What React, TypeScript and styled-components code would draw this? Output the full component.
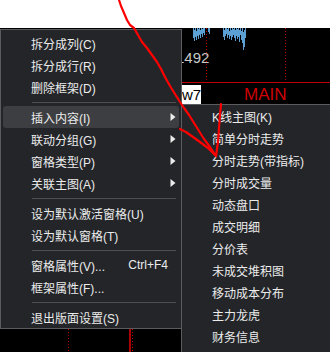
import React from "react";
import styled, { createGlobalStyle } from "styled-components";

const Global = createGlobalStyle`
  html, body { margin: 0; padding: 0; background: #fff; }
  body {
    width: 330px; height: 352px; overflow: hidden;
    font-family: "Liberation Sans", "Noto Sans CJK SC", sans-serif;
  }
`;

const Screen = styled.div`
  position: relative;
  width: 330px;
  height: 352px;
  overflow: hidden;
  display: flex;
  flex-direction: column;
  background: #fff;
`;

const TopStrip = styled.div`
  flex: none;
  height: 28px;
  background: #fff;
`;

const Chart = styled.div`
  flex: 1;
  display: flex;
  flex-direction: column;
  background: #000;
`;

const UpperPane = styled.div`
  position: relative;
  flex: none;
  height: 54px;
`;

const PaneSvg = styled.svg`
  display: block;
`;

const PriceLabel = styled.span`
  position: absolute;
  left: 176px;
  top: 22px;
  color: #c8c8c8;
  font: 15px/15px "Liberation Sans", sans-serif;
`;

const RedRule = styled.div`
  flex: none;
  height: 1px;
  background: #c00000;
`;

const LabelRow = styled.div`
  flex: none;
  box-sizing: border-box;
  height: 21px;
  display: flex;
  align-items: flex-start;
  padding: 2px 0 0 182px;
`;

const Tag = styled.span`
  width: 19px;
  height: 19px;
  background: #fff;
  color: #000;
  font: 15px/19px "Liberation Sans", sans-serif;
  text-align: center;
`;

const MainLabel = styled.span`
  margin-left: 43px;
  color: #d00000;
  font: 17px/19px "Liberation Sans", sans-serif;
`;

const LowerPane = styled.div`
  flex: 1;
`;

const Menu = styled.div<{ $left: number; $top: number; $width: number; $height: number; $padTop: number }>`
  position: absolute;
  left: ${(p) => p.$left}px;
  top: ${(p) => p.$top}px;
  width: ${(p) => p.$width}px;
  height: ${(p) => p.$height}px;
  box-sizing: border-box;
  padding-top: ${(p) => p.$padTop}px;
  background: #232529;
  border: 1px solid #5a5c60;
  display: flex;
  flex-direction: column;
  color: #ececec;
  font-size: 12px;
`;

const Item = styled.div<{ $active?: boolean; $padLeft: number }>`
  flex: none;
  height: 22px;
  margin: 0 2px;
  padding: 0 3px 0 ${(p) => p.$padLeft}px;
  display: flex;
  align-items: center;
  border-radius: 3px;
  background: ${(p) => (p.$active ? "#3d3e41" : "transparent")};
  white-space: nowrap;
`;

const ItemLabel = styled.span`
  flex: 1;
`;

const Shortcut = styled.span`
  margin-right: 8px;
  font-family: "Liberation Sans", sans-serif;
`;

const Separator = styled.div`
  flex: none;
  height: 8px;
  display: flex;
  align-items: center;
  padding: 0 5px 0 31px;
  &::after {
    content: "";
    flex: 1;
    height: 1px;
    background: #4d4f53;
  }
`;

const Annotation = styled.svg`
  position: absolute;
  left: 0;
  top: 0;
  pointer-events: none;
`;

const Arrow = () => (
  <svg width="6" height="8" viewBox="0 0 6 8">
    <polygon points="0.5,0 5.5,4 0.5,8" fill="#ececec" />
  </svg>
);

type Entry = { label?: string; sub?: boolean; active?: boolean; shortcut?: string; sep?: boolean };

const mainItems: Entry[] = [
  { label: "拆分成列(C)" },
  { label: "拆分成行(R)" },
  { label: "删除框架(D)" },
  { sep: true },
  { label: "插入内容(I)", sub: true, active: true },
  { label: "联动分组(G)", sub: true },
  { label: "窗格类型(P)", sub: true },
  { label: "关联主图(A)", sub: true },
  { sep: true },
  { label: "设为默认激活窗格(U)" },
  { label: "设为默认窗格(T)" },
  { sep: true },
  { label: "窗格属性(V)...", shortcut: "Ctrl+F4" },
  { label: "框架属性(F)..." },
  { sep: true },
  { label: "退出版面设置(S)" },
];

const subItems = [
  "K线主图(K)",
  "简单分时走势",
  "分时走势(带指标)",
  "分时成交量",
  "动态盘口",
  "成交明细",
  "分价表",
  "未成交堆积图",
  "移动成本分布",
  "主力龙虎",
  "财务信息",
];

const bars: [number, number, number][] = [
  [193, 0, 10], [194, 2, 13], [195, 0, 9], [196, 3, 12], [197, 0, 8], [198, 1, 11],
  [199, 0, 7], [200, 2, 10], [201, 0, 6], [202, 1, 9], [203, 0, 5], [204, 0, 7],
  [208, 0, 4], [209, 0, 6],
  [223, 0, 9], [224, 2, 12], [225, 0, 8], [226, 0, 6], [227, 1, 10], [228, 0, 7],
  [229, 3, 11], [230, 0, 8], [231, 2, 12], [232, 0, 9], [233, 1, 7], [234, 0, 10],
  [235, 2, 13], [236, 0, 8], [237, 1, 11], [238, 0, 9], [239, 2, 14], [240, 0, 7],
  [241, 3, 12], [242, 0, 15], [243, 4, 22], [244, 2, 19], [245, 0, 10],
];

const line = (pts: number[][]) => pts.map((p) => p.join(",")).join(" ");

export default function App() {
  return (
    <>
      <Global />
      <Screen>
        <TopStrip />
        <Chart>
          <UpperPane>
            <PaneSvg width="330" height="54">
              {bars.map(([x, y1, y2]) => (
                <line key={x} x1={x + 0.5} x2={x + 0.5} y1={y1} y2={y2} stroke="#5b9fd3" strokeWidth="1" />
              ))}
              <line x1="206.5" x2="206.5" y1="0" y2="54" stroke="#c00000" strokeDasharray="1 2" />
              <line x1="285.5" x2="285.5" y1="0" y2="54" stroke="#c00000" strokeDasharray="1 2" />
            </PaneSvg>
            <PriceLabel>1492</PriceLabel>
          </UpperPane>
          <RedRule />
          <LabelRow>
            <Tag>w7</Tag>
            <MainLabel>MAIN</MainLabel>
          </LabelRow>
          <LowerPane>
            <PaneSvg width="330" height="248">
              <line x1="68.5" x2="68.5" y1="0" y2="248" stroke="#c00000" strokeDasharray="1 2" />
              <line x1="130" x2="130" y1="0" y2="248" stroke="#e00000" strokeWidth="1.5" />
              <line x1="132.5" x2="132.5" y1="0" y2="248" stroke="#c00000" strokeDasharray="1 2" />
            </PaneSvg>
          </LowerPane>
        </Chart>

        <Menu $left={0} $top={29} $width={182} $height={300} $padTop={2}>
          {mainItems.map((it, i) =>
            it.sep ? (
              <Separator key={i} />
            ) : (
              <Item key={i} $active={it.active} $padLeft={28}>
                <ItemLabel>{it.label}</ItemLabel>
                {it.shortcut && <Shortcut>{it.shortcut}</Shortcut>}
                {it.sub && <Arrow />}
              </Item>
            )
          )}
        </Menu>

        <Menu $left={181} $top={104} $width={160} $height={260} $padTop={0}>
          {subItems.map((s) => (
            <Item key={s} $padLeft={28}>
              <ItemLabel>{s}</ItemLabel>
            </Item>
          ))}
        </Menu>

        <Annotation width="330" height="352" viewBox="0 0 330 352">
          <g fill="none" stroke="#ff0000" strokeWidth="2.2" strokeLinejoin="round" strokeLinecap="round">
            <polyline
              points={line([
                [119, 0], [121, 6], [124, 13], [127, 20], [130, 25], [134, 28], [138, 35], [142, 42],
                [147, 48], [152, 55], [157, 62], [161, 69], [165, 77], [170, 86], [175, 94], [180, 102],
                [184, 108], [189, 115], [194, 123], [199, 131], [204, 139], [210, 147], [216, 156],
              ])}
            />
            <polyline points={line([[180, 129], [186, 132], [193, 137], [200, 142], [208, 148], [216, 156]])} />
            <polyline points={line([[221, 104], [220, 115], [219, 128], [218, 142], [216, 156]])} />
          </g>
        </Annotation>
      </Screen>
    </>
  );
}
